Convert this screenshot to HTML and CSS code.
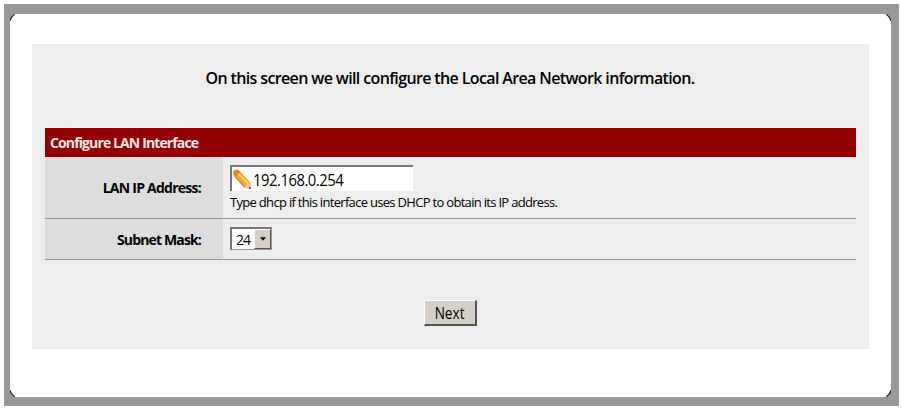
FILE: index.html
```html
<!DOCTYPE html>
<html lang="en">
<head>
<meta charset="utf-8">
<title>Configure LAN Interface</title>
<link rel="stylesheet" href="styles.css">
</head>
<body>
<div class="frame">
  <main class="page">
    <svg class="corner tl" viewBox="0 0 5 7"><path class="outside" d="M0 0H5V1L1 5V7H0Z"/><path class="arc" d="M4.5 .5L3 1.5L1 4L.5 6.5"/></svg>
    <svg class="corner tr" viewBox="0 0 5 7"><path class="outside" d="M0 0H5V1L1 5V7H0Z"/><path class="arc" d="M4.5 .5L3 1.5L1 4L.5 6.5"/></svg>
    <svg class="corner bl" viewBox="0 0 5 7"><path class="outside" d="M0 0H5V1L1 5V7H0Z"/><path class="arc" d="M4.5 .5L3 1.5L1 4L.5 6.5"/></svg>
    <svg class="corner br" viewBox="0 0 5 7"><path class="outside" d="M0 0H5V1L1 5V7H0Z"/><path class="arc" d="M4.5 .5L3 1.5L1 4L.5 6.5"/></svg>
    <form class="panel">
      <p class="intro"><span>On this screen we will configure the Local Area Network information.</span></p>
      <div class="heading"><span>Configure LAN Interface</span></div>
      <div class="row address-row">
        <div class="label"><span class="lan">LAN IP Address:</span></div>
        <div class="value">
          <div class="field">
            <svg class="pencil" viewBox="0 0 20 21"><path d="M1 1.5L4.8.5Q6.5.4 7.5 2L18.2 13.5L19 20L12.5 18.8L2 7.5Q1 5.5 1 1.5Z" fill="#f2a12c"/><path d="M2 3L5 1Q7 1 7.7 3L4 7.5Q1 5.5 2 3Z" fill="#e8772b"/><path d="M6 4.8L16.5 15" stroke="#ffd568" stroke-width="2.3"/><path d="M3 7.7L13 18.5" stroke="#c97824" stroke-width="1"/><path d="M12.6 18.7L14 15.8L18.2 13.7L19 20Z" fill="#eac8a3"/><path d="M17.2 18L18.6 17.8L19 20L16.6 19.5Z" fill="#69513d"/></svg>
            <span>192.168.0.254</span>
          </div>
          <div class="hint"><span>Type dhcp if this interface uses DHCP to obtain its IP address.</span></div>
        </div>
      </div>
      <div class="row mask-row">
        <div class="label"><span class="mask">Subnet Mask:</span></div>
        <div class="value">
          <div class="select"><span>24</span><i class="arrow"><svg viewBox="0 0 7 4"><path d="M0 0H7L3.5 4Z"/></svg></i></div>
        </div>
      </div>
      <button class="next" type="button"><span>Next</span></button>
    </form>
  </main>
</div>
</body>
</html>
```
FILE: styles.css
```css
* { box-sizing: border-box; }
body { margin: 0; padding: 4px; background: #fff; color: #000; font-family: "Open Sans", "Noto Sans", sans-serif; overflow: hidden; }
span { display: inline-block; white-space: nowrap; }
.frame { width: 895px; height: 402px; padding: 10px 8px 9px 6px; background: #999; }
.page { position: relative; height: 383px; padding: 30px 22px 0; background: #fff; }
.corner { position: absolute; width: 5px; height: 7px; }
.outside { fill: #999; }
.arc { fill: none; stroke: #000; stroke-width: 1; }
.tl { left: 0; top: 0; }
.tr { right: 0; top: 0; transform: scaleX(-1); }
.bl { left: 0; bottom: 0; transform: scaleY(-1); }
.br { right: 0; bottom: 0; transform: scale(-1); }
.panel { height: 305px; padding: 0 13px; background: #ededed; }
.intro { margin: 0; height: 84px; padding-top: 24px; text-align: center; font-weight: 600; font-size: 16px; line-height: 20px; letter-spacing: -.63px; }
.intro span { margin-left: -1px; }
.heading { height: 29px; padding-left: 5px; background: #930000; color: #ffe9e4; font-weight: 700; font-size: 14px; line-height: 29px; letter-spacing: -.88px; }
.row { display: flex; border-bottom: 1px solid #999; }
.address-row { height: 62px; }
.mask-row { height: 41px; }
.label { width: 178px; padding-right: 22px; display: flex; align-items: center; justify-content: flex-end; background: #ddd; font-weight: 700; font-size: 14px; letter-spacing: -.75px; }
.mask { letter-spacing: -.85px; }
.value { padding: 8px 0 0 7px; }
.field { display: flex; align-items: center; width: 183px; height: 26px; background: #fff; border-top: 2px solid #777; border-left: 2px solid #777; font-size: 16px; letter-spacing: -.5px; }
.field span { padding-top: 1px; transform: scaleX(.925); transform-origin: left; }
.pencil { width: 20px; height: 21px; margin-right: 1px; }
.hint { font-size: 13px; line-height: 22px; letter-spacing: -.69px; }
.select { display: flex; width: 42px; height: 23px; background: #fff; border: 2px solid; border-color: #777 #ddd #eee #777; border-right: 1px solid #999; border-bottom: 1px solid #999; font-size: 14px; line-height: 21px; padding-left: 4px; letter-spacing: -1px; justify-content: space-between; }
.arrow { display: flex; width: 17px; height: 20px; align-items: center; justify-content: center; background: #d4d0c8; border: 1px solid; border-color: #fff #555 #555 #fff; }
.arrow svg { width: 6px; height: 4px; }
.next { display: block; width: 53px; height: 26px; margin: 40px 0 0 379px; padding: 0; background: #d4d0c8; color: #000; border: solid; border-width: 1px 2px 2px 1px; border-color: #fff #555 #555 #fff; font-family: inherit; font-size: 16px; line-height: 24px; }
.next span { transform: scaleX(.85); }
```
